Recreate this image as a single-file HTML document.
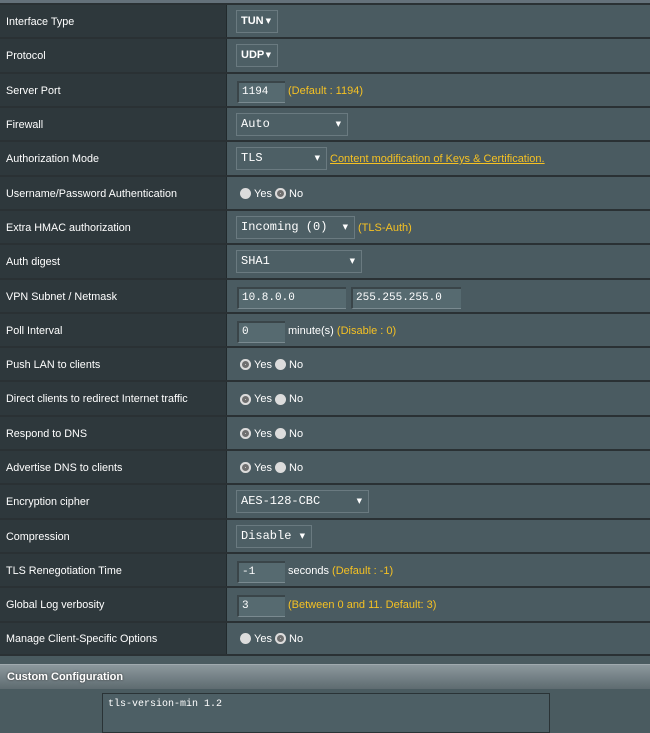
<!DOCTYPE html>
<html><head><meta charset="utf-8"><style>
*{box-sizing:border-box;margin:0;padding:0}
body{width:650px;height:728px;overflow:hidden;background:#4a5b60;font-family:"Liberation Sans",sans-serif;font-size:11px;color:#fff;position:relative}
.top{position:absolute;left:0;top:0;width:650px;height:3px;background:#64717a}
.row{position:absolute;left:0;width:650px;border-top:2px solid #2a3134}
.lab{position:absolute;left:0;top:0;bottom:0;width:227px;background:#2e383c;padding-left:6px;display:flex;align-items:center;border-right:1px solid #222a2d;font-size:10.8px}
.val{position:absolute;left:228px;top:0;bottom:0;right:0;background:#4a5b61}
.sel{position:absolute;top:5px;left:8px;height:23px;border:1px solid #6a7a80;background:#4d5f65;font-family:"Liberation Mono",monospace;font-size:12px;padding-left:4px;line-height:21px;color:#fff}
.sel.b{font-family:"Liberation Sans",sans-serif;font-weight:bold;font-size:11px;padding-left:4px}
.sel:after{content:"\25BC";position:absolute;right:6px;top:0;font-size:7px;font-family:"DejaVu Sans",sans-serif}
.inp{position:absolute;top:7px;left:9px;height:22px;background:#566a70;border-top:2px solid #3a4549;border-left:2px solid #3a4549;border-bottom:1px solid #7a8a90;font-family:"Liberation Mono",monospace;font-size:11px;padding-left:3px;line-height:18px}
.y{color:#f5c123}
.t{position:absolute;top:0;bottom:0;display:flex;align-items:center;white-space:nowrap}
.r{display:inline-block;width:11px;height:11px;border-radius:50%;background:#dcdcdc;margin-right:3px;vertical-align:-1px}
.r.on{box-shadow:inset 0 0 0 2px #dcdcdc,inset 0 0 0 5px #6f6f6f}
.hdr{position:absolute;left:0;top:664px;width:650px;height:25px;background:linear-gradient(#8c989d,#5e6b70);border-top:1px solid #a0aaae;font-weight:bold;font-size:11px;padding-left:7px;line-height:24px;text-shadow:0 0 2px #333}
.ta{position:absolute;left:102px;top:693px;width:448px;height:40px;border:1px solid #2a3336;background:#4d5f65;font-family:"Liberation Mono",monospace;font-size:10px;padding:5px 5px}
</style></head><body>
<div class="top"></div>

<div class="row" style="top:3px;height:35px"><div class="lab">Interface Type</div><div class="val"><div class="sel b" style="width:42px">TUN</div></div></div>
<div class="row" style="top:37px;height:35px"><div class="lab">Protocol</div><div class="val"><div class="sel b" style="width:42px">UDP</div></div></div>
<div class="row" style="top:72px;height:35px"><div class="lab">Server Port</div><div class="val"><div class="inp" style="width:48px">1194</div><span class="t y" style="left:60px">(Default : 1194)</span></div></div>
<div class="row" style="top:106px;height:35px"><div class="lab">Firewall</div><div class="val"><div class="sel" style="width:112px">Auto</div></div></div>
<div class="row" style="top:140px;height:36px"><div class="lab">Authorization Mode</div><div class="val"><div class="sel" style="width:91px">TLS</div><span class="t y" style="left:102px;text-decoration:underline">Content modification of Keys &amp; Certification.</span></div></div>
<div class="row" style="top:175px;height:35px"><div class="lab">Username/Password Authentication</div><div class="val"><span class="t" style="left:12px"><span class="r"></span>Yes&nbsp;<span class="r on"></span>No</span></div></div>
<div class="row" style="top:209px;height:35px"><div class="lab">Extra HMAC authorization</div><div class="val"><div class="sel" style="width:119px">Incoming (0)</div><span class="t y" style="left:130px">(TLS-Auth)</span></div></div>
<div class="row" style="top:243px;height:36px"><div class="lab">Auth digest</div><div class="val"><div class="sel" style="width:126px">SHA1</div></div></div>
<div class="row" style="top:278px;height:35px"><div class="lab">VPN Subnet / Netmask</div><div class="val"><div class="inp" style="width:109px">10.8.0.0</div><div class="inp" style="left:123px;width:110px">255.255.255.0</div></div></div>
<div class="row" style="top:312px;height:35px"><div class="lab">Poll Interval</div><div class="val"><div class="inp" style="width:48px">0</div><span class="t" style="left:60px">minute(s)&nbsp;<span class="y">(Disable : 0)</span></span></div></div>
<div class="row" style="top:346px;height:35px"><div class="lab">Push LAN to clients</div><div class="val"><span class="t" style="left:12px"><span class="r on"></span>Yes&nbsp;<span class="r"></span>No</span></div></div>
<div class="row" style="top:380px;height:36px"><div class="lab">Direct clients to redirect Internet traffic</div><div class="val"><span class="t" style="left:12px"><span class="r on"></span>Yes&nbsp;<span class="r"></span>No</span></div></div>
<div class="row" style="top:415px;height:35px"><div class="lab">Respond to DNS</div><div class="val"><span class="t" style="left:12px"><span class="r on"></span>Yes&nbsp;<span class="r"></span>No</span></div></div>
<div class="row" style="top:449px;height:35px"><div class="lab">Advertise DNS to clients</div><div class="val"><span class="t" style="left:12px"><span class="r on"></span>Yes&nbsp;<span class="r"></span>No</span></div></div>
<div class="row" style="top:483px;height:36px"><div class="lab">Encryption cipher</div><div class="val"><div class="sel" style="width:133px">AES-128-CBC</div></div></div>
<div class="row" style="top:518px;height:35px"><div class="lab">Compression</div><div class="val"><div class="sel" style="width:76px">Disable</div></div></div>
<div class="row" style="top:552px;height:35px"><div class="lab">TLS Renegotiation Time</div><div class="val"><div class="inp" style="width:48px">-1</div><span class="t" style="left:60px">seconds&nbsp;<span class="y">(Default : -1)</span></span></div></div>
<div class="row" style="top:586px;height:36px"><div class="lab">Global Log verbosity</div><div class="val"><div class="inp" style="width:48px">3</div><span class="t y" style="left:60px">(Between 0 and 11. Default: 3)</span></div></div>
<div class="row" style="top:621px;height:35px;border-bottom:2px solid #2a3134"><div class="lab">Manage Client-Specific Options</div><div class="val"><span class="t" style="left:12px"><span class="r"></span>Yes&nbsp;<span class="r on"></span>No</span></div></div>

<div class="hdr">Custom Configuration</div>
<div class="ta">tls-version-min 1.2</div>
</body></html>
